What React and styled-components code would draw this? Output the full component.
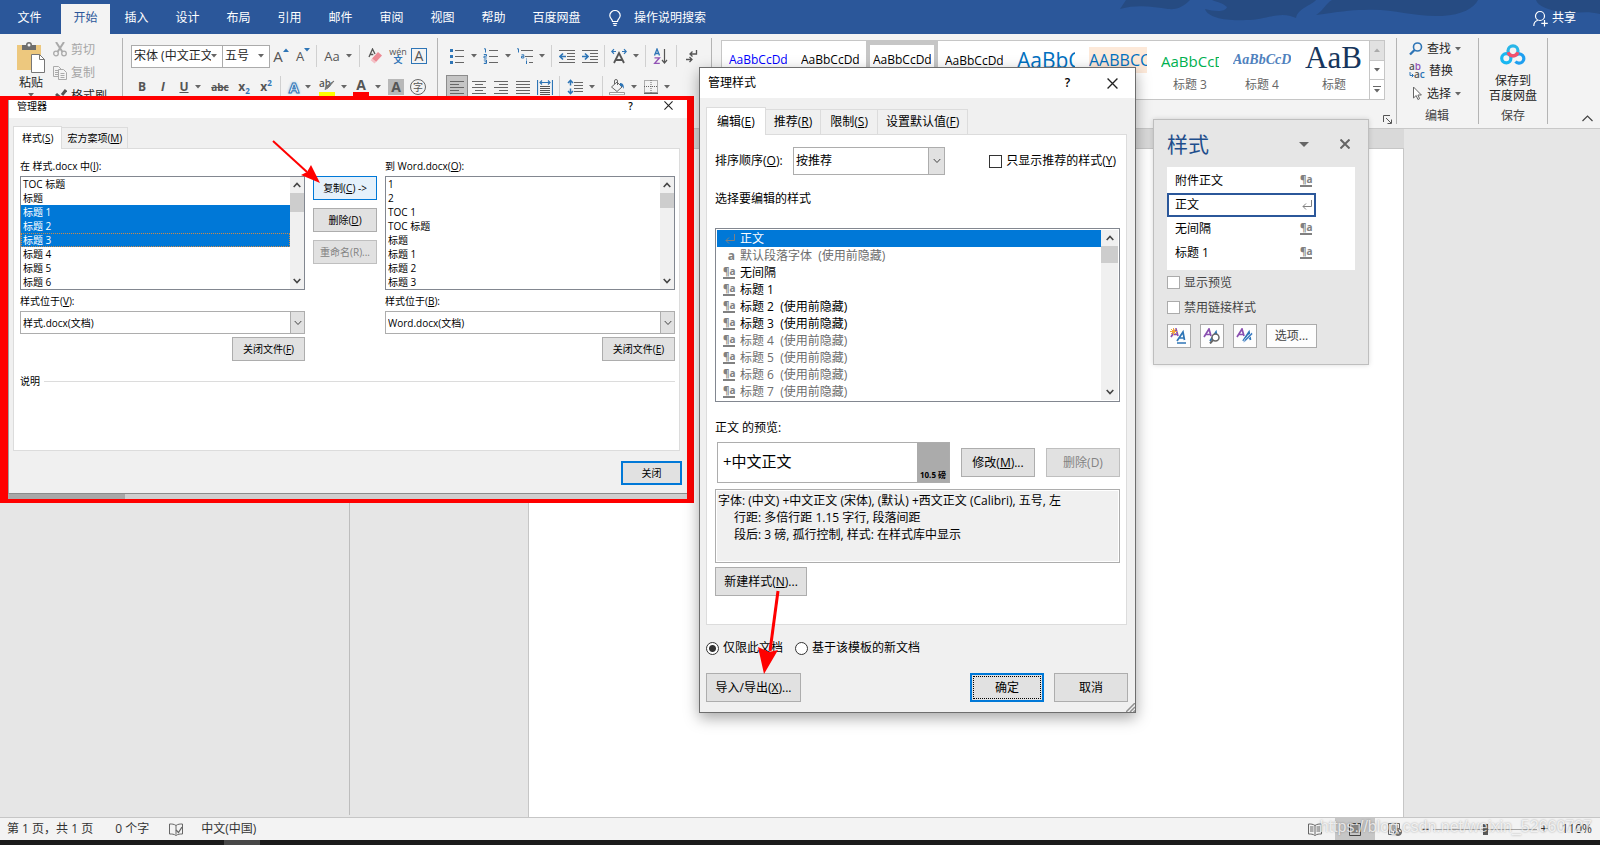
import React, { useState } from "react";
import styled, { createGlobalStyle, css } from "styled-components";

const GlobalStyle = createGlobalStyle`
*{
	box-sizing: border-box;
}
body{
	margin: 0;
	overflow: hidden;
	font-family: "Open Sans", "Noto Sans CJK SC", sans-serif;
	font-size: 12px;
	line-height: 16px;
	color: #262626;
}
button, input, select{
	font: inherit;
	color: inherit;
	margin: 0;
}
ul{
	list-style: none;
	margin: 0;
	padding: 0;
}
svg{
	display: block;
	flex: none;
}
`

const Desktop = styled.div`
position: relative;
display: flex;
flex-direction: column;
height: 100vh;
overflow: hidden;
background: #e6e6e6;
`

/* ---------- top bar ---------- */

const TabBar = styled.nav`
position: relative;
display: flex;
align-items: flex-end;
height: 34px;
flex: none;
background: #2b579a;
color: white;
`
const Waves = styled.svg`
position: absolute;
right: 0;
top: 0;
`
const RibbonTab = styled.button`
height: 30px;
min-width: 49px;
margin-right: 2px;
padding: 0 0 2px;
border: none;
white-space: nowrap;
background: ${p => (p.$active ? "#f3f3f3" : "none")};
color: ${p => (p.$active ? "#2b579a" : "white")};
`
const FileTab = styled(RibbonTab)`
width: 59px;
`
const WideTab = styled(RibbonTab)`
width: 73px;
`
const TellMe = styled.button`
display: flex;
align-items: center;
gap: 13px;
height: 30px;
margin-left: 14px;
padding: 0 0 2px;
border: none;
background: none;
color: white;
`
const Share = styled(TellMe)`
position: relative;
gap: 4px;
margin-left: auto;
margin-right: 24px;
`

/* ---------- ribbon ---------- */

const Ribbon = styled.div`
display: flex;
flex: none;
height: 95px;
padding: 4px 0;
background: #f3f3f3;
border-bottom: 1px solid #c8c8c8;
`
const Group = styled.div`
display: flex;
flex-direction: column;
padding-top: 2px;
padding-left: 8px;
width: ${p => p.$w}px;
border-right: 1px solid #b4b4b4;
`
const Clipboard = styled(Group)`
flex-direction: row;
padding-top: 0;
padding-left: 16px;
gap: 7px;
`
const PasteButton = styled.button`
display: flex;
flex-direction: column;
align-items: center;
gap: 2px;
width: 30px;
padding: 4px 0 0;
border: none;
background: none;
white-space: nowrap;
`
const StackList = styled.div`
display: flex;
flex-direction: column;
`
const StackButton = styled.button`
display: flex;
align-items: center;
gap: 4px;
height: 23px;
padding: 0;
border: none;
background: none;
white-space: nowrap;
color: ${p => (p.$off ? "#a6a6a6" : "#262626")};
`
const ToolRow = styled.div`
display: flex;
align-items: center;
height: ${p => p.$h || 32}px;
`
const Tool = styled.button`
display: flex;
align-items: center;
justify-content: center;
gap: 6px;
width: ${p => p.$w || 22}px;
height: 24px;
padding: 0;
border: 1px solid ${p => (p.$on ? "#8c8c8c" : "transparent")};
background: ${p => (p.$on ? "#c5c5c5" : "none")};
color: #555;
`
const Sep = styled.span`
width: 1px;
height: 22px;
margin: 0 3px;
background: #d0d0d0;
`
const Combo = styled.label`
display: flex;
align-items: center;
width: ${p => p.$w}px;
height: 23px;
padding: 0 5px 0 2px;
border: 1px solid #ababab;
margin-right: -1px;
background: white;

input{
	flex: 1;
	min-width: 0;
	padding: 0;
	border: none;
	outline: none;
	background: none;
	color: #262626;
}
`
const Letter = styled.span`
font-size: ${p => p.$size || 14}px;
font-weight: ${p => (p.$bold ? 700 : 400)};
font-style: ${p => (p.$italic ? "italic" : "normal")};
text-decoration: ${p => p.$line || "none"};
line-height: 16px;

sub, sup{
	font-size: 8px;
	line-height: 0;
	color: #2e75b6;
}
`
const Raised = styled(Letter)`
display: flex;
align-items: flex-start;
`
const Glow = styled(Letter)`
color: white;
-webkit-text-stroke: 1px #2e75b6;
text-shadow: 0 0 3px #5b9bd5;
`
const Barred = styled(Letter)`
height: 18px;
width: 16px;
line-height: 14px;
text-align: center;
border-bottom: 4px solid ${p => p.$bar};
`
const Boxed = styled(Letter)`
width: 16px;
height: 16px;
line-height: 14px;
text-align: center;
border: 1px solid ${p => p.$line2 || "#2e75b6"};
border-radius: ${p => (p.$round ? 8 : 0)}px;
background: ${p => p.$bg || "none"};
`
const Phonetic = styled.span`
display: flex;
flex-direction: column;
align-items: center;
font-size: 9px;
line-height: 8px;

b{
	color: #2e75b6;
}
`

const Gallery = styled.div`
display: flex;
flex: 1;
height: 60px;
margin: 2px 10px 0 9px;
border: 1px solid #c6c6c6;
background: white;
overflow: hidden;
`
const GalleryItems = styled.div`
display: flex;
flex: 1;
overflow: hidden;
`
const StyleItem = styled.button`
display: flex;
flex-direction: column;
align-items: center;
width: 72px;
flex: none;
padding: ${p => (p.$on ? 2 : 6)}px 0 0;
border: ${p => (p.$on ? "4px solid #c6c6c6" : "none")};
background: none;
color: #666;
`
const Sample = styled.span`
display: block;
width: 58px;
height: 26px;
overflow: hidden;
text-align: left;
white-space: nowrap;
line-height: ${p => p.$lh || 26}px;
font-family: ${p => p.$font || '"Open Sans"'}, sans-serif;
font-size: ${p => p.$size || 12}px;
font-weight: ${p => (p.$bold ? 700 : 400)};
font-style: ${p => (p.$bold ? "italic" : "normal")};
color: ${p => p.$color || "black"};
background: ${p => p.$bg || "none"};
margin-bottom: 4px;
`
const GalleryScroll = styled.div`
display: flex;
flex-direction: column;
width: 15px;
border-left: 1px solid #c6c6c6;
`
const ScrollStep = styled.button`
display: flex;
flex: 1;
align-items: center;
justify-content: center;
padding: 0;
border: none;
background: ${p => (p.$off ? "#e1e1e1" : "white")};

& + &{
	border-top: 1px solid #c6c6c6;
}
`
const Launcher = styled.button`
align-self: flex-end;
width: 10px;
height: 10px;
margin: 0 3px 0 -12px;
padding: 0;
border: none;
background: none;
`
const EditGroup = styled(Group)`
border-left: 1px solid #b4b4b4;
padding-top: 0;
padding-left: 12px;
`
const GroupLabel = styled.span`
margin-top: 3px;
align-self: ${p => (p.$left ? "flex-start" : "center")};
padding-left: ${p => (p.$left ? 16 : 0)}px;
color: #444;
`
const SaveGroup = styled(Group)`
padding-left: 0;
`
const SaveButton = styled.button`
display: flex;
flex-direction: column;
align-items: center;
padding: 4px 0 0;
border: none;
background: none;
line-height: 15px;
height: 67px;
`
const SaveText = styled.span`
margin-top: 8px;
`
const Collapse = styled.button`
display: flex;
align-items: flex-end;
justify-content: flex-end;
width: 52px;
padding: 0 7px 2px 0;
border: none;
background: none;
`

/* ---------- document ---------- */

const Workspace = styled.div`
display: flex;
flex: 1;
min-height: 0;
`
const NavPane = styled.div`
width: 350px;
border-right: 1px solid #bdbdbd;
margin-bottom: 2px;
`
const DocArea = styled.div`
display: flex;
flex-direction: column;
flex: 1;
`
const Ruler = styled.div`
height: 20px;
margin-left: 179px;
margin-right: 196px;
background: #d9d9d9;
border-bottom: 1px solid #c6c6c6;
`
const Page = styled.div`
flex: 1;
margin-left: 178px;
margin-right: 196px;
border: 1px solid #c6c6c6;
border-width: 0 1px;
background: white;
`
const StatusBar = styled.footer`
position: relative;
display: flex;
align-items: center;
height: 23px;
flex: none;
padding: 0 8px 0 7px;
border-top: 1px solid #c6c6c6;
background: #f3f3f3;
color: #333;
white-space: nowrap;
`
const StatusItem = styled.span`
margin-right: ${p => p.$mr}px;
`
const ViewButton = styled.button`
display: flex;
align-items: center;
justify-content: center;
width: 40px;
height: 22px;
padding: 0;
border: none;
background: ${p => (p.$on ? "#c6c6c6" : "none")};
`
const Views = styled.div`
display: flex;
margin-left: auto;
margin-right: 4px;
`
const ZoomButton = styled.button`
width: 14px;
padding: 0;
border: none;
background: none;
font-size: 14px;
`
const ZoomSlider = styled.input`
appearance: none;
width: 104px;
height: 1px;
background: #a6a6a6;

&::-webkit-slider-thumb{
	appearance: none;
	width: 5px;
	height: 11px;
	background: #595959;
}
`
const ZoomValue = styled.span`
width: 41px;
text-align: right;
`
const Watermark = styled.span`
position: absolute;
right: 8px;
top: 0;
font-family: "Liberation Sans", sans-serif;
font-size: 16px;
line-height: 18px;
color: rgba(255, 255, 255, 0.75);
text-shadow: 0 0 2px rgba(0, 0, 0, 0.35);
pointer-events: none;
`
const Taskbar = styled.div`
height: 5px;
flex: none;
padding-left: 224px;
background: #1b1b1b;

span{
	display: block;
	width: 36px;
	height: 5px;
	background: #484848;
}
`

/* ---------- dialogs ---------- */

const TitleBar = styled.header`
display: flex;
align-items: center;
height: ${p => p.$h}px;
padding: 0 0 ${p => p.$bottom || 0}px 8px;
background: white;
color: black;

h2{
	flex: 1;
	margin: 0;
	font-size: inherit;
	font-weight: 400;
}
`
const TitleButton = styled.button`
display: flex;
align-items: center;
justify-content: center;
width: ${p => p.$w}px;
height: 18px;
padding: 0;
border: none;
background: none;
font-weight: 600;
`
const Tabs = styled.div`
display: flex;
align-items: flex-end;
padding: ${p => p.$top}px 0 0 ${p => p.$left}px;
`
const Tab = styled.button`
height: ${p => p.$h}px;
padding: 0 ${p => p.$pad}px;
border: 1px solid #dcdcdc;
border-left-width: ${p => (p.$active ? 1 : 0)}px;
border-bottom: none;
background: #f0f0f0;
white-space: nowrap;

${p =>
	p.$active &&
	css`
	position: relative;
	margin-bottom: -1px;
	background: white;
`}
`
const PushButton = styled.button`
width: ${p => (p.$w ? p.$w + "px" : "auto")};
height: ${p => p.$h || 29}px;
padding: 0;
border: 1px solid #adadad;
background: #e1e1e1;
white-space: nowrap;

&:disabled{
	color: #838383;
	border-color: #bfbfbf;
}
${p =>
	p.$hot &&
	css`
	border-color: #0078d7;
	background: #e5f1fb;
`}
${p =>
	p.$default &&
	css`
	border: 2px solid #0078d7;
`}
${p =>
	p.$focus &&
	css`
	outline: 1px dotted black;
	outline-offset: -4px;
`}
`
const ListBox = styled.div`
display: flex;
border: 1px solid #828790;
padding: ${p => p.$pad || 0}px;
background: white;

ul{
	flex: 1;
}
`
const Row = styled.li`
display: flex;
align-items: center;
height: ${p => p.$h}px;
padding-left: 2px;
white-space: pre;
color: ${p => (p.$on ? "white" : p.$dim ? "#6d6d6d" : "black")};
background: ${p => (p.$on ? "#0078d7" : "none")};
outline: ${p => (p.$focus ? "1px dotted #c98a4b" : "none")};
outline-offset: -1px;
`
const Mark = styled.span`
display: flex;
justify-content: flex-end;
width: 16px;
margin-right: 5px;
color: #808080;
`
const ScrollBar = styled.div`
display: flex;
flex-direction: column;
align-items: center;
width: ${p => p.$w}px;
padding: 5px 0;
background: #f0f0f0;
`
const Thumb = styled.span`
width: 100%;
height: ${p => p.$h}px;
margin-top: 5px;
margin-bottom: auto;
background: #cdcdcd;
`
const SelectBox = styled.span`
position: relative;
display: flex;
width: ${p => (p.$w ? p.$w + "px" : "auto")};
height: ${p => p.$h}px;
border: 1px solid #adadad;
background: white;

select{
	flex: 1;
	appearance: none;
	padding: 0 2px;
	border: none;
	outline: none;
	background: none;
	color: black;
}
`
const SelectArrow = styled.span`
display: flex;
align-items: center;
justify-content: center;
width: ${p => p.$w || 16}px;
border-left: 1px solid #adadad;
background: #e1e1e1;
pointer-events: none;
`

const RedFrame = styled.section`
position: absolute;
left: 0;
top: 96px;
width: 694px;
border: solid red;
border-width: 4px 7px 4px 8px;
padding-bottom: 5px;
background: linear-gradient(90deg, #a8a8a8 117px, #cfcfcf 117px);
font-size: 10px;
`
const ManagerWindow = styled.div`
border-left: 1px solid #a0a0a0;
border-bottom: 1px solid #8c8c8c;
background: #f0f0f0;
color: black;
`
const ManagerPanel = styled.div`
margin: 0 7px 0 4px;
padding: 9px 4px 61px 6px;
border: 1px solid #dcdcdc;
background: white;
`
const Columns = styled.div`
display: grid;
grid-template-columns: 285fr 64px 290fr;
gap: 8px;
`
const Column = styled.div`
display: flex;
flex-direction: column;
gap: 2px;
`
const FieldLabel = styled.label`
margin-top: 1px;
`
const RightButton = styled(PushButton)`
align-self: flex-end;
margin-top: 1px;
`
const Actions = styled.div`
display: flex;
flex-direction: column;
gap: 8px;
padding-top: 18px;
`
const Description = styled.div`
display: flex;
align-items: center;
gap: 4px;
margin-top: 12px;

&::after{
	content: "";
	flex: 1;
	border-top: 1px solid #dcdcdc;
}
`
const ManagerFooter = styled.div`
display: flex;
justify-content: flex-end;
padding: 10px 5px 8px;
`

const StylesDialog = styled.section`
position: absolute;
left: 699px;
top: 67px;
width: 437px;
border: 1px solid #6e6e6e;
background: #f0f0f0;
color: black;
box-shadow: 0 5px 14px rgba(0, 0, 0, 0.35);
line-height: 18px;
`
const DialogPanel = styled.div`
display: flex;
flex-direction: column;
margin: 0 8px 0 6px;
padding: 12px 6px 28px 8px;
border: 1px solid #dcdcdc;
background: white;
`
const Line = styled.div`
display: flex;
align-items: center;
`
const SortLabel = styled.label`
width: 78px;
`
const Caption = styled.span`
margin-top: ${p => p.$mt}px;
margin-bottom: ${p => p.$mb}px;
`
const CheckLabel = styled.label`
display: flex;
align-items: center;
gap: 4px;
white-space: nowrap;
`
const OnlyRecommended = styled(CheckLabel)`
margin-left: auto;
margin-right: 4px;
`
const Check = styled.input`
appearance: none;
width: 13px;
height: 13px;
border: 1px solid ${p => p.$line || "#333"};
background: white;
`
const Radio = styled(Check)`
border-radius: 50%;

&:checked{
	background: radial-gradient(#333 0 3px, white 4px);
}
`
const Preview = styled.div`
display: flex;
width: 233px;
height: 41px;
margin-left: 2px;
margin-right: 11px;
border: 1px solid #adadad;
background: white;
`
const PreviewText = styled.span`
flex: 1;
padding-left: 5px;
line-height: 37px;
font-size: 15px;
`
const PreviewSize = styled.span`
display: flex;
align-items: flex-end;
justify-content: center;
width: 32px;
background: #ababab;
font-size: 8px;
font-weight: 700;
line-height: 14px;
white-space: nowrap;
`
const RemoveButton = styled(PushButton)`
margin-left: auto;
`
const Details = styled.div`
height: 74px;
margin-top: 6px;
padding: 2px;
border: 1px solid #adadad;
background: #f0f0f0;
box-shadow: inset 0 0 0 1px white;
line-height: 17px;

p{
	margin: 0;
	padding-left: 16px;
}
p:first-child{
	padding-left: 0;
}
`
const NewStyle = styled(PushButton)`
align-self: flex-start;
margin-top: 4px;
`
const DialogFoot = styled.div`
display: flex;
flex-direction: column;
padding: 14px 7px 10px 6px;
`
const Radios = styled.div`
display: flex;
gap: 12px;
`
const FootButtons = styled.div`
display: flex;
gap: 10px;
margin-top: 16px;

button:first-child{
	margin-right: auto;
}
`
const Grip = styled.svg`
position: absolute;
right: 0;
bottom: 0;
`

const StylePane = styled.aside`
position: absolute;
right: 231px;
top: 119px;
width: 216px;
padding: 8px 13px 16px;
border: 1px solid #bebebe;
background: #e6e6e6;
box-shadow: 0 0 5px rgba(0, 0, 0, 0.15);
color: #444;
`
const PaneHead = styled.div`
display: flex;
align-items: center;
height: 32px;
margin-bottom: 7px;

h3{
	flex: 1;
	margin: 0;
	font-size: 21px;
	font-weight: 400;
	color: #1f4e8c;
}
`
const PaneTool = styled.button`
display: flex;
padding: 0;
margin-right: ${p => p.$mr}px;
border: none;
background: none;
`
const PaneList = styled.ul`
padding: 2px 39px 5px 0;
background: white;
`
const PaneRow = styled.li`
display: flex;
align-items: center;
justify-content: space-between;
height: 24px;
padding: 0 2px 0 6px;
border: 2px solid ${p => (p.$on ? "#2b579a" : "transparent")};
color: black;
`
const PaneCheck = styled(CheckLabel)`
height: 25px;
`
const PaneButtons = styled.div`
display: flex;
gap: 9px;
margin-top: 4px;
`
const PaneButton = styled.button`
display: flex;
align-items: center;
justify-content: center;
width: ${p => p.$w || 24}px;
height: 24px;
padding: 0;
border: 1px solid #ababab;
background: #fdfdfd;
`
const LinkedMark = styled.span`
width: 12px;
height: 12px;
border-bottom: 2px solid #808080;
font-size: 10px;
line-height: 9px;
font-weight: 700;
color: #808080;
text-align: center;
white-space: nowrap;
`
const Arrow = styled.svg`
position: absolute;
left: ${p => p.$x}px;
top: ${p => p.$y}px;
pointer-events: none;
`

/* ---------- small drawings ---------- */

const Caret = ({ color = "#666", up }) => (
	<svg width="6" height="4"><path d={up ? "M0 4h6L3 .5z" : "M0 0h6L3 3.5z"} fill={color} /></svg>
);
const Chevron = ({ up, thin }) => (
	<svg width="8" height="6" viewBox="0 0 8 6" fill="none" stroke="#444" strokeWidth={thin ? 1 : 1.6}>
		<path d={up ? "M.7 5 4 1.5 7.3 5" : "M.7 1 4 4.5 7.3 1"} />
	</svg>
);
const Cross = ({ size = 10, color = "#222", w = 1.2 }) => (
	<svg width={size} height={size} viewBox="0 0 10 10" stroke={color} strokeWidth={w}>
		<path d="M.5.5l9 9M9.5.5l-9 9" />
	</svg>
);
const Draw = ({ w = 16, h = 16, children }) => (
	<svg width={w} height={h} viewBox={`0 0 ${w} ${h}`} fill="none" stroke="#666" strokeWidth="1">
		{children}
	</svg>
);
const Bulb = () => (
	<svg width="12" height="16" viewBox="0 0 12 16" fill="none" stroke="white" strokeWidth="1.2">
		<path d="M3.5 11.500C3.500 9 .8 8.500.8 5.500a5.200 5 0 0 1 10.400 0C11.200 8.500 8.500 9 8.500 11.500zM3.800 13.500h4.400M4.500 15.300h3" />
	</svg>
);
const Person = () => (
	<svg width="15" height="17" viewBox="0 0 15 17" fill="none" stroke="white" strokeWidth="1.2">
		<circle cx="7" cy="6" r="4.500" />
		<path d="M.8 16c0-3 1.800-5 4-5.700M11.500 10v6.500M8.300 13.300h6.500" />
	</svg>
);
const PasteIcon = () => (
	<svg width="28" height="31" viewBox="0 0 28 31">
		<path d="M0 3h24v25H0z" fill="#edc87e" />
		<path d="M5 3h4a3 3 0 0 1 6 0h4v5H5z" fill="#6d6d6d" />
		<circle cx="12" cy="3" r="1.500" fill="#f3f3f3" />
		<path d="M14.500 12.500h8l5 5v13h-13z" fill="white" stroke="#777" />
		<path d="M22.500 12.500v5h5" fill="none" stroke="#777" />
	</svg>
);
const Scissors = () => (
	<Draw w={14} h={15}>
		<g stroke="#aaa" strokeWidth="1.300">
			<path d="M3 0l6.500 10M11 0L4.500 10" strokeWidth="2" />
			<circle cx="3" cy="11.500" r="2.300" /><circle cx="11" cy="11.500" r="2.300" />
		</g>
	</Draw>
);
const CopyIcon = () => (
	<Draw w={14} h={14}>
		<g stroke="#aaa">
			<path d="M.5.5h5l3 3v7h-8zM2 4.500h3M2 6.500h3M2 8.500h3" />
			<path d="M5.500 3.500h5l3 3v7h-8z" fill="#f3f3f3" />
			<path d="M7.500 7.500h4M7.500 9.500h4M7.500 11.500h4" />
		</g>
	</Draw>
);
const Brush = () => (
	<Draw w={14} h={14}>
		<path d="M13 1L9 6" stroke="#555" strokeWidth="3" />
		<path d="M4 4l6 5-2 2-6-5z" fill="#555" stroke="none" />
		<path d="M2 7l5 4-3 3-4-3z" fill="#edc87e" stroke="none" />
	</Draw>
);
const Eraser = () => (
	<Draw w={14} h={16}>
		<path d="M1 9L4.500 1 7 6M2.300 6.500h3" stroke="#555" strokeWidth="1.300" />
		<path d="M10 4l4 3.500-6 6.500-4-3.500z" fill="#ec8a95" stroke="none" />
		<path d="M4 10.500L8 14l-1.500 1.500-3.800-3.300z" fill="#f4bfc5" stroke="none" />
	</Draw>
);
const Pen = () => (
	<Draw w={16} h={18}>
		<text x="0" y="9" fontSize="10" fontWeight="600" fill="#555" stroke="none">ab</text>
		<path d="M15 3l-6 7-3 1.500 1-3z" fill="#777" stroke="#777" />
		<path d="M0 14h16v4H0z" fill="#ff0" stroke="none" />
	</Draw>
);
const Bullets = () => (
	<Draw>
		<path d="M6 2.500h9M6 8.500h9M6 14.500h9" />
		<path d="M1 1h3v3H1zM1 7h3v3H1zM1 13h3v3H1z" fill="#2e75b6" stroke="none" />
	</Draw>
);
const Numbers = () => (
	<Draw>
		<path d="M6 2.500h9M6 8.500h9M6 14.500h9" />
		<path d="M1 .8h1.500V4.500M.8 6.500h2.700v1.700H1V10h2.800M.8 12h2.700v3.500H.8M1.500 13.800h2" stroke="#2e75b6" />
	</Draw>
);
const Multi = () => (
	<Draw>
		<path d="M4 2.500h12M8 8.500h8M12 14.500h4" />
		<path d="M0 .8h1.500V4.500M4.500 6.800h2.300V10H4.500V8.300h2M9.500 12.500V16M9.500 10.500v1" stroke="#2e75b6" />
	</Draw>
);
const Indent = ({ right }) => (
	<Draw>
		<path d="M0 2.500h16M8 5.500h8M8 8.500h8M8 11.500h8M0 14.500h16" />
		<path d={right ? "M0 8.500h6M3 5.500l3 3-3 3" : "M7 8.500H1M4 5.500l-3 3 3 3"} stroke="#2e75b6" strokeWidth="1.700" />
	</Draw>
);
const Stretch = () => (
	<Draw>
		<path d="M3 15L8 5l5 10M5 12h6" stroke="#555" strokeWidth="1.800" />
		<path d="M5 3.500H.8M3 1.200L.8 3.500 3 5.800M11 3.500h4.200M13 1.200l2.200 2.300L13 5.800" stroke="#2e75b6" strokeWidth="1.200" />
	</Draw>
);
const SortIcon = () => (
	<Draw>
		<path d="M1.500 7.500l2.500-6.500 2.500 6.500M2.500 5.500h3" stroke="#2e75b6" strokeWidth="1.300" />
		<path d="M1.500 9.800h5l-5 5.700h5.300" stroke="#9254b5" strokeWidth="1.300" />
		<path d="M11.500 1v13.500M9 12l2.500 3 2.500-3" stroke="#555" strokeWidth="1.200" />
	</Draw>
);
const Marks = () => (
	<Draw w={12} h={14}>
		<path d="M10.500 1v4H4M6.500 2.500L4 5l2.500 2.500M0 10.500h6M3.500 8L6 10.500 3.500 13" stroke="#555" strokeWidth="1.300" />
	</Draw>
);
const alignPaths = {
	left: "M1 2.500h14M1 5.500h9M1 8.500h14M1 11.500h9M1 14.500h14",
	center: "M1 2.500h14M4 5.500h8M1 8.500h14M4 11.500h8M1 14.500h14",
	right: "M1 2.500h14M6 5.500h9M1 8.500h14M6 11.500h9M1 14.500h14",
	justify: "M1 2.500h14M1 5.500h14M1 8.500h14M1 11.500h14M1 14.500h14",
};
const Align = ({ kind }) => (
	<Draw>
		<path d={alignPaths[kind]} />
	</Draw>
);
const Spread = () => (
	<Draw>
		<path d="M3 7.500h10M3 9.500h10M3 11.500h10M3 13.500h10M3 15.500h10" stroke="#555" />
		<path d="M.5 1v15M15.500 1v15M3 3.500h10M5 1.500l-2 2 2 2M11 1.500l2 2-2 2" stroke="#2e75b6" strokeWidth="1.200" />
	</Draw>
);
const Spacing = () => (
	<Draw>
		<path d="M7 3.500h9M7 6.500h9M7 9.500h9M7 12.500h9" />
		<path d="M3.500 1.500v5M1 4l2.500-2.700L6 4M3.500 9.500v5M1 12l2.500 2.700L6 12" stroke="#2e75b6" strokeWidth="1.500" />
	</Draw>
);
const Bucket = () => (
	<Draw>
		<path d="M2.500 8l5.500-5 5 5-5 4.500zM5.500 5V2a1.500 1.500 0 0 1 3 0v4" />
		<path d="M11 4c3 0 4 2 4 6-1-2-2-3-4-3z" fill="#2e75b6" stroke="none" />
		<path d="M.5 13.500h15v2.300H.5z" fill="white" stroke="#999" />
	</Draw>
);
const Borders = () => (
	<Draw w={14} h={14}>
		<path d="M.5.5h13v12H.5zM7 0v13M0 6.500h14" strokeDasharray="1 1" />
		<path d="M0 13.500h14" strokeWidth="1.500" />
	</Draw>
);
const Find = () => (
	<Draw w={14} h={14}>
		<circle cx="8.500" cy="5" r="4" stroke="#2e75b6" strokeWidth="1.600" />
		<path d="M5.500 8L1 12.500" stroke="#2e75b6" strokeWidth="2.300" />
	</Draw>
);
const Replace = () => (
	<Draw w={16} h={16}>
		<g fontSize="10" fontWeight="600" stroke="none">
			<text x="0" y="7" fill="#555">a<tspan fill="#9254b5">b</tspan></text>
			<text x="5" y="15" fill="#555">a<tspan fill="#2e75b6">c</tspan></text>
		</g>
		<path d="M1 9v3.500h3M2.800 10.800l1.700 1.700-1.700 1.700" stroke="#2e75b6" />
	</Draw>
);
const Pointer = () => (
	<Draw w={14} h={15}>
		<path d="M4.500 1v11l2.700-2.500 1.700 4 1.700-.8-1.700-3.700h3.500z" fill="white" />
	</Draw>
);
const Netdisk = () => (
	<svg width="26" height="21" viewBox="0 0 26 21" fill="none" strokeWidth="3.200">
		<circle cx="6.300" cy="14.300" r="4.600" stroke="#19b7f1" />
		<path d="M15.500 17.500a4.700 4.700 0 1 0 .5-6.500" stroke="#1e9ff0" />
		<circle cx="13" cy="6.800" r="5" stroke="#29b6e8" />
		<path d="M8.200 8.300a5 5 0 0 0 9.600 0" stroke="#f4506b" />
	</svg>
);
const Return = ({ color = "#808080" }) => (
	<Draw w={10} h={10}>
		<path d="M9.500 0v6.500H1M4 3.500l-3 3 3 3" stroke={color} />
	</Draw>
);
const LaunchIcon = () => (
	<Draw w={9} h={9}>
		<path d="M.5 7V.5H7M3 3l5 5M8.500 4.500v4h-4" stroke="#555" />
	</Draw>
);
const StyleIcon = ({ kind }) => (
	<Draw w={18} h={16}>
		<path d="M1 9L6 1l2 7M3 6.500h4" stroke="#8a4fb0" strokeWidth="1.700" />
		<path d="M7 13L13 4l1.500 8M9 10h5" stroke="#2e75b6" strokeWidth="1.700" />
		{kind === "new" && <path d="M3.500 0v7M0 3.500h7M1 1l5 5M6 1L1 6" stroke="#f2a63b" />}
		{kind === "new" && <path d="M7 15h9" stroke="#2e75b6" strokeWidth="1.500" />}
		{kind === "inspect" && <circle cx="12.500" cy="9.500" r="3.500" fill="white" strokeWidth="1.500" />}
		{kind === "inspect" && <path d="M10 12l-3 3.500" strokeWidth="2" />}
		{kind === "manage" && <path d="M17 6l-7 7-3 2 1.500-3.500 7-7z" fill="#4a86c8" stroke="#fdfdfd" strokeWidth=".6" />}
	</Draw>
);
const Book = ({ check }) => (
	<Draw w={14} h={13}>
		<path d="M7 2.500v9M7 2.500C5 1 3 1 .5 1v10c2.500 0 4.500 0 6.500 1.500C9 11 11 11 13.500 11V1C11 1 9 1 7 2.500z" />
		{check ? (
			<path d="M7 7l2.500 2.500L13 4" strokeWidth="1.300" />
		) : (
			<path d="M2 4h3.500M2 6h3.500M2 8h3.500M8.500 4H12M8.500 6H12M8.500 8H12" />
		)}
	</Draw>
);
const PrintLayout = () => (
	<Draw w={14} h={13}>
		<path d="M1.500.5h11v12h-11zM3.500 3h7M3.500 5h7M3.500 7h7M3.500 9h7" stroke="#444" />
	</Draw>
);
const WebLayout = () => (
	<Draw w={14} h={13}>
		<path d="M.5.5h11v11H.5zM2 3h8M2 5h8M2 7h4M2 9h3" />
		<circle cx="10" cy="9" r="3.500" fill="#777" />
		<path d="M8 8l2 1v2M11 6.500l1 2" stroke="white" />
	</Draw>
);

/* ---------- data ---------- */

const ribbonTabs = ["插入", "设计", "布局", "引用", "邮件", "审阅", "视图", "帮助"];
const samples = [
	{ text: "AaBbCcDd", color: "#0000ff" },
	{ text: "AaBbCcDd" },
	{ text: "AaBbCcDd", on: true },
	{ text: "AaBbCcDd", lh: 28 },
	{ text: "AaBbC", color: "#0070c0", size: 21 },
	{ text: "AABBCC", color: "#0070c0", size: 16, bg: "#fde9d9" },
	{ text: "AaBbCcDd", color: "#00b050", size: 15, name: "标题 3", lh: 28 },
	{ text: "AaBbCcDd", color: "#4f81bd", size: 14, name: "标题 4", bold: true, font: '"Liberation Serif"' },
	{ text: "AaB", color: "#17365d", size: 31, name: "标题", font: '"Liberation Serif"', lh: 22 },
];
const leftStyles = ["TOC 标题", "标题", "标题 1", "标题 2", "标题 3", "标题 4", "标题 5", "标题 6"];
const rightStyles = ["1", "2", "TOC 1", "TOC 标题", "标题", "标题 1", "标题 2", "标题 3"];
const hidden = "  (使用前隐藏)";
const allStyles = [
	{ name: "正文", mark: "return" },
	{ name: "默认段落字体" + hidden, mark: "a", dim: true },
	{ name: "无间隔" },
	{ name: "标题 1" },
	{ name: "标题 2" + hidden },
	{ name: "标题 3" + hidden },
	{ name: "标题 4" + hidden, dim: true },
	{ name: "标题 5" + hidden, dim: true },
	{ name: "标题 6" + hidden, dim: true },
	{ name: "标题 7" + hidden, dim: true },
];

function Scroll({ w, thumb }) {
	return (
		<ScrollBar $w={w}>
			<Chevron up />
			<Thumb $h={thumb} />
			<Chevron />
		</ScrollBar>
	);
}

function TopTabs() {
	return (
		<TabBar>
			<Waves width="480" height="34" viewBox="0 0 480 34" fill="#264b82">
				<path d="M6 0h64c-6 6-12 10-22 9C34 7 18 4 0 9z" />
				<path d="M92 0h104c-4 5-18 8-20 18-16-8-28 2-50 2-20 1-38-2-41-11 8 2 20 4 22-2-4-4-10-5-15-7z" />
				<path d="M212 0h146c-4 8-16 15-36 16-32 1-48-8-78-6-14 0-26 2-48 5 8-5 10-12 16-15z" />
				<path d="M416 0h64v14c-14-4-24 0-38-2-14-2-24-6-26-12z" />
			</Waves>
			<FileTab>文件</FileTab>
			<RibbonTab $active>开始</RibbonTab>
			{ribbonTabs.map(t => (
				<RibbonTab key={t}>{t}</RibbonTab>
			))}
			<WideTab>百度网盘</WideTab>
			<TellMe>
				<Bulb />
				操作说明搜索
			</TellMe>
			<Share>
				<Person />
				共享
			</Share>
		</TabBar>
	);
}

function FontGroup() {
	return (
		<Group $w={315}>
			<ToolRow>
				<Combo $w={92}>
					<input aria-label="字体" defaultValue="宋体 (中文正文)" />
					<Caret />
				</Combo>
				<Combo $w={48}>
					<input aria-label="字号" defaultValue="五号" />
					<Caret />
				</Combo>
				<Tool $w={24}><Raised $size={15}>A<Caret up color="#2e75b6" /></Raised></Tool>
				<Tool $w={20}><Raised $size={13}>A<Caret color="#2e75b6" /></Raised></Tool>
				<Sep />
				<Tool $w={36}><Letter $size={13}>Aa</Letter><Caret /></Tool>
				<Sep />
				<Tool $w={24}><Eraser /></Tool>
				<Tool><Phonetic>wén<b>文</b></Phonetic></Tool>
				<Tool $w={20}><Boxed>A</Boxed></Tool>
			</ToolRow>
			<ToolRow $h={30}>
				<Tool><Letter $bold $size={12}>B</Letter></Tool>
				<Tool $w={20}><Letter $bold $italic $size={12}>I</Letter></Tool>
				<Tool $w={34}><Letter $bold $size={12} $line="underline">U</Letter><Caret /></Tool>
				<Tool $w={26}><Letter $bold $size={10} $line="line-through">abc</Letter></Tool>
				<Tool><Letter $bold $size={12}>x<sub>2</sub></Letter></Tool>
				<Tool><Letter $bold $size={12}>x<sup>2</sup></Letter></Tool>
				<Sep />
				<Tool $w={32}><Glow $bold $size={15}>A</Glow><Caret /></Tool>
				<Tool $w={34}><Pen /><Caret /></Tool>
				<Tool $w={34}><Barred $bold $bar="red">A</Barred><Caret /></Tool>
				<Tool $w={24}><Boxed $bold $bg="#b8b8b8" $line2="#b8b8b8">A</Boxed></Tool>
				<Tool $w={20}><Boxed $size={10} $round $line2="#666">字</Boxed></Tool>
			</ToolRow>
		</Group>
	);
}

function ParagraphGroup() {
	return (
		<Group $w={274}>
			<ToolRow>
				<Tool $w={34}><Bullets /><Caret /></Tool>
				<Tool $w={34}><Numbers /><Caret /></Tool>
				<Tool $w={34}><Multi /><Caret /></Tool>
				<Sep />
				<Tool $w={24}><Indent /></Tool>
				<Tool><Indent right /></Tool>
				<Sep />
				<Tool $w={34}><Stretch /><Caret /></Tool>
				<Sep />
				<Tool $w={24}><SortIcon /></Tool>
				<Sep />
				<Tool $w={24}><Marks /></Tool>
			</ToolRow>
			<ToolRow $h={30}>
				<Tool $on><Align kind="left" /></Tool>
				<Tool><Align kind="center" /></Tool>
				<Tool><Align kind="right" /></Tool>
				<Tool><Align kind="justify" /></Tool>
				<Tool><Spread /></Tool>
				<Sep />
				<Tool $w={36}><Spacing /><Caret /></Tool>
				<Sep />
				<Tool $w={34}><Bucket /><Caret /></Tool>
				<Tool $w={34}><Borders /><Caret /></Tool>
			</ToolRow>
		</Group>
	);
}

function RibbonBar() {
	return (
		<Ribbon>
			<Clipboard $w={123}>
				<PasteButton><PasteIcon />粘贴<Caret /></PasteButton>
				<StackList>
					<StackButton $off><Scissors />剪切</StackButton>
					<StackButton $off><CopyIcon />复制</StackButton>
					<StackButton><Brush />格式刷</StackButton>
				</StackList>
			</Clipboard>
			<FontGroup />
			<ParagraphGroup />
			<Gallery>
				<GalleryItems>
					{samples.map((s, i) => (
						<StyleItem key={i} $on={s.on}>
							<Sample $color={s.color} $size={s.size} $bg={s.bg} $bold={s.bold} $font={s.font} $lh={s.lh}>
								{s.text}
							</Sample>
							{s.name}
						</StyleItem>
					))}
				</GalleryItems>
				<GalleryScroll>
					<ScrollStep $off><Caret up color="#aaa" /></ScrollStep>
					<ScrollStep><Caret /></ScrollStep>
					<ScrollStep><Draw w={8} h={7}><path d="M0 .5h8" /><path d="M1 3h6L4 6.500z" fill="#666" stroke="none" /></Draw></ScrollStep>
				</GalleryScroll>
			</Gallery>
			<Launcher aria-label="样式"><LaunchIcon /></Launcher>
			<EditGroup $w={83}>
				<StackButton><Find />查找<Caret /></StackButton>
				<StackButton><Replace />替换</StackButton>
				<StackButton><Pointer />选择<Caret /></StackButton>
				<GroupLabel $left>编辑</GroupLabel>
			</EditGroup>
			<SaveGroup $w={69}>
				<SaveButton>
					<Netdisk />
					<SaveText>保存到</SaveText>
					<span>百度网盘</span>
				</SaveButton>
				<GroupLabel>保存</GroupLabel>
			</SaveGroup>
			<Collapse aria-label="折叠功能区">
				<Draw w={11} h={7}><path d="M.5 6L5.500 1l5 5" stroke="#444" strokeWidth="1.200" /></Draw>
			</Collapse>
		</Ribbon>
	);
}

function ManagerColumn({ id, title, items, selected = [], thumb, mnemonic, file, closeKey }) {
	return (
		<Column>
			<span>{title}</span>
			<ListBox>
				<ul role="listbox">
					{items.map((name, i) => (
						<Row key={name} $h={14} $on={selected.includes(i)} $focus={selected[selected.length - 1] === i}>
							{name}
						</Row>
					))}
				</ul>
				<Scroll w={14} thumb={thumb} />
			</ListBox>
			<FieldLabel htmlFor={id}>样式位于(<u>{mnemonic}</u>):</FieldLabel>
			<SelectBox $h={23}>
				<select id={id}><option>{file}</option></select>
				<SelectArrow $w={14}><Chevron thin /></SelectArrow>
			</SelectBox>
			<RightButton $w={73} $h={24}>关闭文件(<u>{closeKey}</u>)</RightButton>
		</Column>
	);
}

function Manager() {
	return (
		<RedFrame>
			<ManagerWindow>
				<TitleBar $h={18} $bottom={7}>
					<h2>管理器</h2>
					<TitleButton $w={37}>?</TitleButton>
					<TitleButton $w={38}><Cross size={9} /></TitleButton>
				</TitleBar>
				<Tabs $top={8} $left={4}>
					<Tab $h={23} $pad={8} $active>样式(<u>S</u>)</Tab>
					<Tab $h={21} $pad={5}>宏方案项(<u>M</u>)</Tab>
				</Tabs>
				<ManagerPanel>
					<Columns>
						<ManagerColumn
							id="from-file"
							title={<>在 样式.docx 中(<u>I</u>):</>}
							items={leftStyles}
							selected={[2, 3, 4]}
							thumb={19}
							mnemonic="V"
							file="样式.docx(文档)"
							closeKey="F"
						/>
						<Actions>
							<PushButton $h={24} $hot>复制(<u>C</u>) -&gt;</PushButton>
							<PushButton $h={24}>删除(<u>D</u>)</PushButton>
							<PushButton $h={24} disabled>重命名(R)...</PushButton>
						</Actions>
						<ManagerColumn
							id="to-file"
							title={<>到 Word.docx(<u>O</u>):</>}
							items={rightStyles}
							thumb={15}
							mnemonic="B"
							file="Word.docx(文档)"
							closeKey="E"
						/>
					</Columns>
					<Description>说明</Description>
				</ManagerPanel>
				<ManagerFooter>
					<PushButton $w={61} $h={24} $default>关闭</PushButton>
				</ManagerFooter>
			</ManagerWindow>
		</RedFrame>
	);
}

function StyleMark({ kind }) {
	if (kind === "return") return <Return />;
	if (kind === "a") return <b>a</b>;
	return <LinkedMark>¶a</LinkedMark>;
}

function ManageStyles() {
	const [scope, setScope] = useState("doc");
	return (
		<StylesDialog>
			<TitleBar $h={30}>
				<h2>管理样式</h2>
				<TitleButton $w={45}>?</TitleButton>
				<TitleButton $w={45}><Cross size={11} /></TitleButton>
			</TitleBar>
			<Tabs $top={9} $left={6}>
				<Tab $h={28} $pad={10} $active>编辑(<u>E</u>)</Tab>
				<Tab $h={25} $pad={8}>推荐(<u>R</u>)</Tab>
				<Tab $h={25} $pad={9}>限制(<u>S</u>)</Tab>
				<Tab $h={25} $pad={8}>设置默认值(<u>F</u>)</Tab>
			</Tabs>
			<DialogPanel>
				<Line>
					<SortLabel htmlFor="sort">排序顺序(<u>O</u>):</SortLabel>
					<SelectBox $w={152} $h={28}>
						<select id="sort"><option>按推荐</option></select>
						<SelectArrow><Chevron thin /></SelectArrow>
					</SelectBox>
					<OnlyRecommended>
						<Check type="checkbox" />
						<span>只显示推荐的样式(<u>Y</u>)</span>
					</OnlyRecommended>
				</Line>
				<Caption $mt={15} $mb={20}>选择要编辑的样式</Caption>
				<ListBox $pad={1}>
					<ul role="listbox">
						{allStyles.map((s, i) => (
							<Row key={s.name} $h={17} $on={i === 0} $dim={s.dim}>
								<Mark><StyleMark kind={s.mark} /></Mark>
								{s.name}
							</Row>
						))}
					</ul>
					<Scroll w={17} thumb={17} />
				</ListBox>
				<Caption $mt={17} $mb={5}>正文 的预览:</Caption>
				<Line>
					<Preview>
						<PreviewText>+中文正文</PreviewText>
						<PreviewSize>10.5 磅</PreviewSize>
					</Preview>
					<PushButton $w={74}>修改(<u>M</u>)...</PushButton>
					<RemoveButton $w={74} disabled>删除(D)</RemoveButton>
				</Line>
				<Details>
					<p>字体: (中文) +中文正文 (宋体), (默认) +西文正文 (Calibri), 五号, 左</p>
					<p>行距: 多倍行距 1.15 字行, 段落间距</p>
					<p>段后: 3 磅, 孤行控制, 样式: 在样式库中显示</p>
				</Details>
				<NewStyle $w={92}>新建样式(<u>N</u>)...</NewStyle>
			</DialogPanel>
			<DialogFoot>
				<Radios>
					<CheckLabel>
						<Radio type="radio" name="scope" checked={scope === "doc"} onChange={() => setScope("doc")} />
						仅限此文档
					</CheckLabel>
					<CheckLabel>
						<Radio type="radio" name="scope" checked={scope === "template"} onChange={() => setScope("template")} />
						基于该模板的新文档
					</CheckLabel>
				</Radios>
				<FootButtons>
					<PushButton $w={95}>导入/导出(<u>X</u>)...</PushButton>
					<PushButton $w={74} $default $focus>确定</PushButton>
					<PushButton $w={74}>取消</PushButton>
				</FootButtons>
			</DialogFoot>
			<Grip width="9" height="9" stroke="#909090" strokeWidth="1.500">
				<path d="M0 9l9-9M4 9l5-5M7.500 9L9 7.500" />
			</Grip>
		</StylesDialog>
	);
}

function StylesPane() {
	return (
		<StylePane>
			<PaneHead>
				<h3>样式</h3>
				<PaneTool $mr={31} aria-label="任务窗格选项"><svg width="10" height="5"><path d="M0 0h10L5 5z" fill="#666" /></svg></PaneTool>
				<PaneTool $mr={5} aria-label="关闭"><Cross color="#666" w={2} /></PaneTool>
			</PaneHead>
			<PaneList>
				<PaneRow>附件正文<LinkedMark>¶a</LinkedMark></PaneRow>
				<PaneRow $on>正文<Return /></PaneRow>
				<PaneRow>无间隔<LinkedMark>¶a</LinkedMark></PaneRow>
				<PaneRow>标题 1<LinkedMark>¶a</LinkedMark></PaneRow>
			</PaneList>
			<PaneCheck><Check type="checkbox" $line="#ababab" />显示预览</PaneCheck>
			<PaneCheck><Check type="checkbox" $line="#ababab" />禁用链接样式</PaneCheck>
			<PaneButtons>
				<PaneButton aria-label="新建样式"><StyleIcon kind="new" /></PaneButton>
				<PaneButton aria-label="样式检查器"><StyleIcon kind="inspect" /></PaneButton>
				<PaneButton aria-label="管理样式"><StyleIcon kind="manage" /></PaneButton>
				<PaneButton $w={51}>选项...</PaneButton>
			</PaneButtons>
		</StylePane>
	);
}

export default function App() {
	return (
		<Desktop>
			<GlobalStyle />
			<TopTabs />
			<RibbonBar />
			<Workspace>
				<NavPane />
				<DocArea>
					<Ruler />
					<Page />
				</DocArea>
			</Workspace>
			<StatusBar>
				<StatusItem $mr={22}>第 1 页，共 1 页</StatusItem>
				<StatusItem $mr={20}>0 个字</StatusItem>
				<StatusItem $mr={18}><Book check /></StatusItem>
				<StatusItem $mr={0}>中文(中国)</StatusItem>
				<Views>
					<ViewButton aria-label="阅读视图"><Book /></ViewButton>
					<ViewButton aria-label="页面视图" $on><PrintLayout /></ViewButton>
					<ViewButton aria-label="Web 版式视图"><WebLayout /></ViewButton>
				</Views>
				<ZoomButton>−</ZoomButton>
				<ZoomSlider type="range" aria-label="显示比例" min="0" max="100" defaultValue="51" />
				<ZoomButton>+</ZoomButton>
				<ZoomValue>110%</ZoomValue>
				<Watermark>https://blog.csdn.net/weixin_52660727</Watermark>
			</StatusBar>
			<Taskbar><span /></Taskbar>
			<StylesPane />
			<Manager />
			<ManageStyles />
			<Arrow $x={270} $y={138} width="54" height="48" viewBox="0 0 54 48">
				<path d="M3 3l34 31" stroke="red" strokeWidth="2" />
				<path d="M50 45L31 37l6-3 4-7z" fill="red" />
			</Arrow>
			<Arrow $x={755} $y={590} width="28" height="86" viewBox="0 0 28 86">
				<path d="M23 1l-8 60" stroke="red" strokeWidth="3" />
				<path d="M9 84L3 57l11 5 9-2z" fill="red" />
			</Arrow>
		</Desktop>
	);
}
